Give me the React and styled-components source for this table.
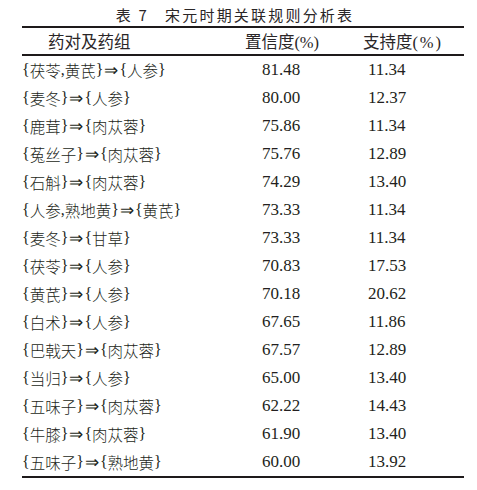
import React from "react";
import styled, { createGlobalStyle } from "styled-components";

const Global = createGlobalStyle`
  html, body { margin: 0; padding: 0; background: #ffffff; }
  body { font-family: "Liberation Serif", "Noto Sans CJK SC", serif; color: #231f20; }
`;

const Page = styled.div`
  width: 477px;
  height: 490px;
  padding: 0 13px 0 22px;
  box-sizing: border-box;
`;

const Title = styled.div`
  height: 26px;
  padding-top: 2px;
  box-sizing: border-box;
  display: flex;
  justify-content: center;
  align-items: center;
  font-family: "Noto Sans CJK SC", sans-serif;
  font-size: 15px;
  font-weight: 400;
  letter-spacing: 2.2px;
  color: #2a2627;
  padding-right: 16px;
`;

const TitleNum = styled.span`
  margin-right: 16px;
`;

const Table = styled.div`
  border-top: 2px solid #1e1a1b;
  border-bottom: 2px solid #1e1a1b;
`;

const Row = styled.div`
  display: grid;
  grid-template-columns: 200px 120px 122px;
  height: ${(p) => p.$h}px;
  align-items: center;
  border-bottom: ${(p) => (p.$rule ? "2px solid #1e1a1b" : "none")};
  font-size: 16px;
`;

const HeadCell = styled.div`
  font-family: "Noto Sans CJK SC", sans-serif;
  font-size: 16.5px;
  text-align: ${(p) => p.$align || "center"};
  padding-left: ${(p) => p.$pl || 0}px;
  white-space: nowrap;
  color: #2a2627;
`;

const Pct = styled.span`
  font-family: "Liberation Serif", serif;
  letter-spacing: ${(p) => p.$ls || 0}px;
`;

const NameCell = styled.div`
  white-space: nowrap;
  font-family: "Noto Sans CJK SC", sans-serif;
  font-size: 15.5px;
  font-weight: 300;
  display: flex;
  align-items: center;
`;

const Brace = styled.span`
  font-family: "Liberation Serif", serif;
  font-size: 16px;
`;

const Arrow = styled.span`
  font-family: "DejaVu Sans", sans-serif;
  font-size: 17px;
  margin: 0 1px;
`;

const NumCell = styled.div`
  font-family: "Liberation Serif", serif;
  font-size: 17px;
  padding-left: ${(p) => p.$pl}px;
`;

const rows = [
  [["茯苓", "黄芪"], ["人参"], "81.48", "11.34"],
  [["麦冬"], ["人参"], "80.00", "12.37"],
  [["鹿茸"], ["肉苁蓉"], "75.86", "11.34"],
  [["菟丝子"], ["肉苁蓉"], "75.76", "12.89"],
  [["石斛"], ["肉苁蓉"], "74.29", "13.40"],
  [["人参", "熟地黄"], ["黄芪"], "73.33", "11.34"],
  [["麦冬"], ["甘草"], "73.33", "11.34"],
  [["茯苓"], ["人参"], "70.83", "17.53"],
  [["黄芪"], ["人参"], "70.18", "20.62"],
  [["白术"], ["人参"], "67.65", "11.86"],
  [["巴戟天"], ["肉苁蓉"], "67.57", "12.89"],
  [["当归"], ["人参"], "65.00", "13.40"],
  [["五味子"], ["肉苁蓉"], "62.22", "14.43"],
  [["牛膝"], ["肉苁蓉"], "61.90", "13.40"],
  [["五味子"], ["熟地黄"], "60.00", "13.92"],
];

const Group = ({ items }) => (
  <>
    <Brace>{"{"}</Brace>
    {items.map((t, i) => (
      <React.Fragment key={i}>
        {i > 0 && <Brace>,</Brace>}
        <span>{t}</span>
      </React.Fragment>
    ))}
    <Brace>{"}"}</Brace>
  </>
);

export default function App() {
  return (
    <>
      <Global />
      <Page>
        <Title>
          <TitleNum>表 7</TitleNum>
          <span>宋元时期关联规则分析表</span>
        </Title>
        <Table>
          <Row $h={26} $rule>
            <HeadCell $align="left" $pl={26}>药对及药组</HeadCell>
            <HeadCell>
              置信度<Pct>(%)</Pct>
            </HeadCell>
            <HeadCell>
              支持度<Pct $ls={2}>(%)</Pct>
            </HeadCell>
          </Row>
          {rows.map(([a, b, c, s], i) => (
            <Row key={i} $h={28}>
              <NameCell>
                <Group items={a} />
                <Arrow>⇒</Arrow>
                <Group items={b} />
              </NameCell>
              <NumCell $pl={40}>{c}</NumCell>
              <NumCell $pl={26}>{s}</NumCell>
            </Row>
          ))}
        </Table>
      </Page>
    </>
  );
}
